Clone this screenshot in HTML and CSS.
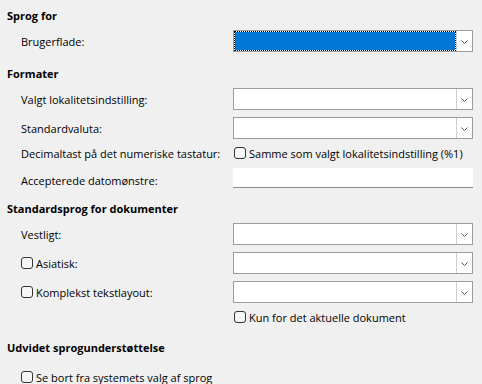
FILE: index.html
```html
<!DOCTYPE html>
<html lang="da">
<head>
<meta charset="utf-8">
<title>Sprogindstillinger</title>
<link rel="stylesheet" href="styles.css">
</head>
<body>
<div class="page">
  <div class="head h1">Sprog for</div>
  <div class="row r22">
    <div class="label">Brugerflade:</div>
    <div class="combo focused"><div class="field"></div><div class="btn"><svg width="7" height="4" viewBox="0 0 7 4"><polyline points="0.5,0.5 3.5,3.5 6.5,0.5" fill="none" stroke="#555" stroke-width="1"/></svg></div></div>
  </div>

  <div class="head h2">Formater</div>
  <div class="row r22">
    <div class="label">Valgt lokalitetsindstilling:</div>
    <div class="combo"><div class="field"></div><div class="btn"><svg width="7" height="4" viewBox="0 0 7 4"><polyline points="0.5,0.5 3.5,3.5 6.5,0.5" fill="none" stroke="#555" stroke-width="1"/></svg></div></div>
  </div>
  <div class="row r22 gap7">
    <div class="label">Standardvaluta:</div>
    <div class="combo"><div class="field"></div><div class="btn"><svg width="7" height="4" viewBox="0 0 7 4"><polyline points="0.5,0.5 3.5,3.5 6.5,0.5" fill="none" stroke="#555" stroke-width="1"/></svg></div></div>
  </div>
  <div class="row r22 gap3">
    <div class="label">Decimaltast på det numeriske tastatur:</div>
    <label class="check"><span class="box"></span><span>Samme som valgt lokalitetsindstilling (%1)</span></label>
  </div>
  <div class="row r20 gap4 bottomalign">
    <div class="label">Accepterede datomønstre:</div>
    <div class="entry"></div>
  </div>

  <div class="head h3">Standardsprog for dokumenter</div>
  <div class="row r22">
    <div class="label">Vestligt:</div>
    <div class="combo"><div class="field"></div><div class="btn"><svg width="7" height="4" viewBox="0 0 7 4"><polyline points="0.5,0.5 3.5,3.5 6.5,0.5" fill="none" stroke="#555" stroke-width="1"/></svg></div></div>
  </div>
  <div class="row r22 gap7">
    <label class="label check"><span class="box"></span><span>Asiatisk:</span></label>
    <div class="combo"><div class="field"></div><div class="btn"><svg width="7" height="4" viewBox="0 0 7 4"><polyline points="0.5,0.5 3.5,3.5 6.5,0.5" fill="none" stroke="#555" stroke-width="1"/></svg></div></div>
  </div>
  <div class="row r22 gap7">
    <label class="label check"><span class="box"></span><span>Komplekst tekstlayout:</span></label>
    <div class="combo"><div class="field"></div><div class="btn"><svg width="7" height="4" viewBox="0 0 7 4"><polyline points="0.5,0.5 3.5,3.5 6.5,0.5" fill="none" stroke="#555" stroke-width="1"/></svg></div></div>
  </div>
  <div class="row r22 gap3">
    <div class="label"></div>
    <label class="check"><span class="box"></span><span>Kun for det aktuelle dokument</span></label>
  </div>

  <div class="head h4">Udvidet sprogunderstøttelse</div>
  <div class="row r22">
    <label class="label check"><span class="box"></span><span>Se bort fra systemets valg af sprog</span></label>
  </div>
</div>
</body>
</html>
```

FILE: styles.css
```css
html, body {
  margin: 0;
  padding: 0;
  background: #f0f0f0;
}
body {
  font-family: "Open Sans", "Noto Sans", sans-serif;
  font-size: 11px;
  color: #000;
  width: 482px;
  height: 384px;
  overflow: hidden;
}
.page {
  display: flex;
  flex-direction: column;
  padding: 0 9px 0 7px;
}
.head {
  font-weight: bold;
  line-height: 16px;
}
.h1 { padding-top: 8px; padding-bottom: 6px; }
.h2 { padding-top: 14px; padding-bottom: 6px; }
.h3 { padding-top: 13px; padding-bottom: 6px; }
.h4 { padding-top: 12px; padding-bottom: 10px; }

.row {
  display: flex;
  align-items: center;
  padding-left: 14px;
}
.r22 { height: 22px; }
.r20 { height: 20px; }
.gap7 { margin-top: 7px; }
.gap3 { margin-top: 3px; }
.gap4 { margin-top: 4px; }
.bottomalign .label { align-self: flex-end; line-height: 14px; }

.label {
  width: 212px;
  flex: none;
  white-space: nowrap;
}
.combo {
  width: 240px;
  height: 22px;
  box-sizing: border-box;
  border: 1px solid #9c9c9c;
  background: #fff;
  display: flex;
}
.combo .field {
  flex: 1;
}
.combo.focused .field {
  border: 1px dotted #000;
  background: #0078d7;
  background-clip: padding-box;
}
.combo .btn {
  width: 16px;
  flex: none;
  box-sizing: border-box;
  border-left: 1px solid #cfcfcf;
  display: flex;
  align-items: center;
  justify-content: center;
}
.combo .btn svg { display: block; margin-top: 1px; }

.check {
  display: flex;
  align-items: center;
  white-space: nowrap;
}
.row > .check:not(.label) { margin-left: 1px; }
.box {
  width: 12px;
  height: 12px;
  box-sizing: border-box;
  border: 1px solid #333;
  border-radius: 3px;
  background: #f6f6f6;
  margin-right: 3px;
  flex: none;
}
.entry {
  width: 240px;
  height: 20px;
  box-sizing: border-box;
  background: #fff;
  border-bottom: 1px solid #8a8a8a;
}
```
